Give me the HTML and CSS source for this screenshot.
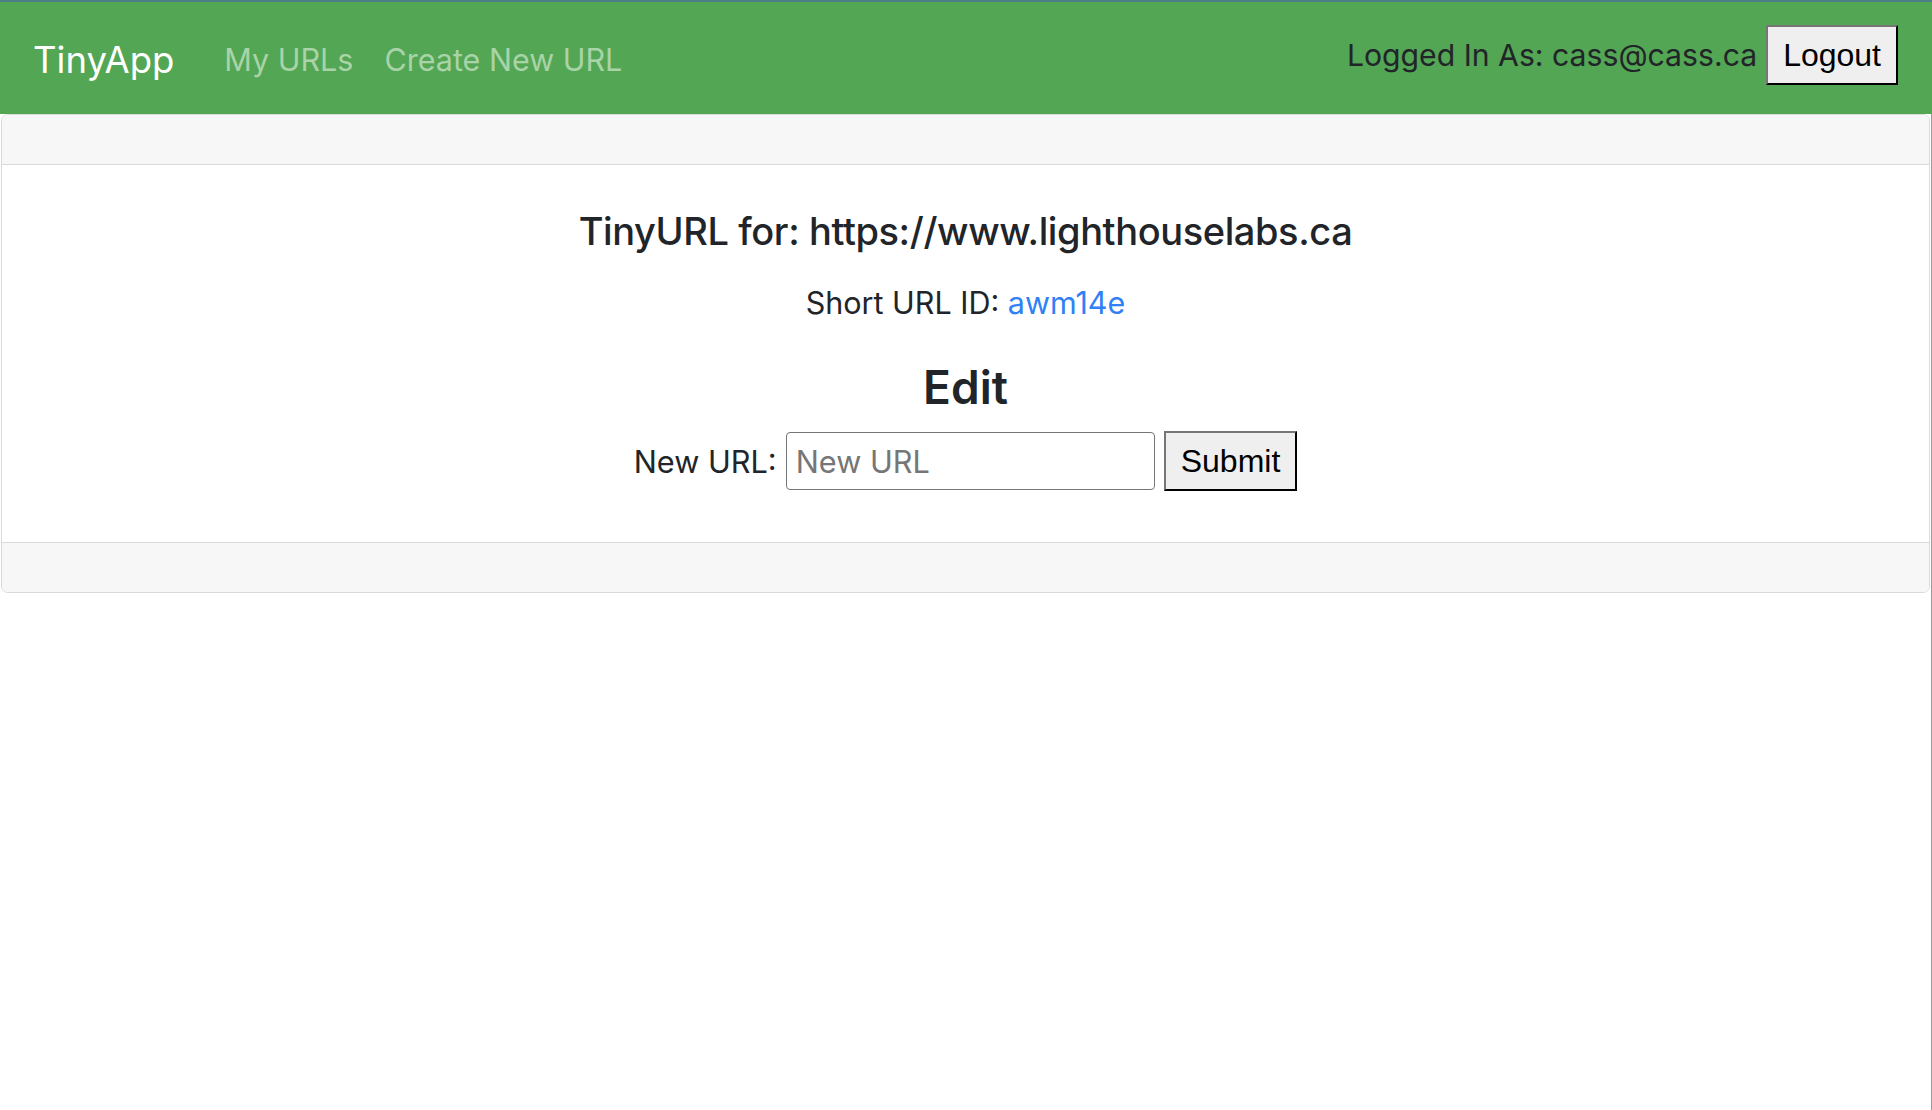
FILE: index.html
```html
<!DOCTYPE html>
<html lang="en">
<head>
<meta charset="utf-8">
<title>TinyApp</title>
<link rel="stylesheet" href="styles.css">
</head>
<body>
<nav class="navbar">
  <a class="brand" href="#">TinyApp</a>
  <a class="nav-link" href="#">My URLs</a>
  <a class="nav-link" href="#">Create New URL</a>
  <div class="user">
    <span class="user-text">Logged In As: cass@cass.ca</span>
    <button class="btn" type="button">Logout</button>
  </div>
</nav>
<main class="main">
  <section class="card">
    <div class="card-header"></div>
    <div class="card-body">
      <h4 class="title">TinyURL for: https://www.lighthouselabs.ca</h4>
      <p class="short">Short URL ID: <a class="short-link" href="#">awm14e</a></p>
      <h3 class="edit">Edit</h3>
      <form class="form">
        <label class="label" for="newurl">New URL:</label>
        <input class="input" id="newurl" type="text" placeholder="New URL">
        <button class="btn" type="submit">Submit</button>
      </form>
    </div>
    <div class="card-footer"></div>
  </section>
</main>
</body>
</html>
```

FILE: styles.css
```css
html, body {
  margin: 0;
  padding: 0;
  background: #ffffff;
}
body {
  font-family: Inter, "Noto Sans", sans-serif;
  color: #212529;
  font-size: 30.5px;
}
.navbar {
  display: flex;
  align-items: center;
  height: 112px;
  border-top: 2px solid #4d7e88;
  background: #53a653;
  padding: 0 34px 0 33px;
}
.brand {
  color: #ffffff;
  text-decoration: none;
  font-size: 36.5px;
  margin-right: 50px;
  margin-top: 3px;
}
.nav-link {
  color: #a9d3a8;
  text-decoration: none;
  font-size: 30.5px;
  margin-right: 31px;
  margin-top: 3px;
}
.user {
  margin-left: auto;
  display: flex;
  align-items: center;
  gap: 9px;
  margin-top: -6px;
}
.user-text {
  font-size: 30.2px;
  color: #212529;
}
.btn {
  font-family: "Liberation Sans", Arial, sans-serif;
  font-size: 32px;
  color: #000;
  background: #efefef;
  border: 2px outset #767676;
  border-color: #767676 #222222 #222222 #767676;
  padding: 10px 15px 9px;
  line-height: 37px;
  margin: 0;
}
.main {
  border-right: 1px solid #9a9a9a;
  min-height: 996px;
  padding: 0 1px 0 1px;
}
.card {
  border: 1px solid #dadada;
  border-radius: 7px;
  overflow: hidden;
}
.card-header {
  height: 49px;
  background: #f7f7f7;
  border-bottom: 1px solid #dadada;
}
.card-footer {
  height: 49px;
  background: #f7f7f7;
  border-top: 1px solid #dadada;
}
.card-body {
  padding: 42px 20px 51px;
  text-align: center;
}
.title {
  margin: 0;
  font-size: 38px;
  letter-spacing: -0.4px;
  font-weight: 500;
  line-height: 49px;
}
.short {
  margin: 26px 0 0;
  line-height: 42px;
}
.short-link {
  color: #3080f7;
  text-decoration: none;
}
.edit {
  margin: 34px 0 0;
  font-size: 46px;
  font-weight: 600;
  line-height: 58px;
}
.form {
  margin-top: 15px;
  display: flex;
  justify-content: center;
  align-items: center;
  gap: 9px;
}
.label {
  font-size: 30.7px;
}
.input {
  width: 369px;
  height: 58px;
  box-sizing: border-box;
  border: 1px solid #767676;
  border-radius: 4px;
  font-family: Inter, "Noto Sans", sans-serif;
  font-size: 30.7px;
  padding: 0 9px;
  color: #212529;
}
.input::placeholder {
  color: #767676;
}
```
